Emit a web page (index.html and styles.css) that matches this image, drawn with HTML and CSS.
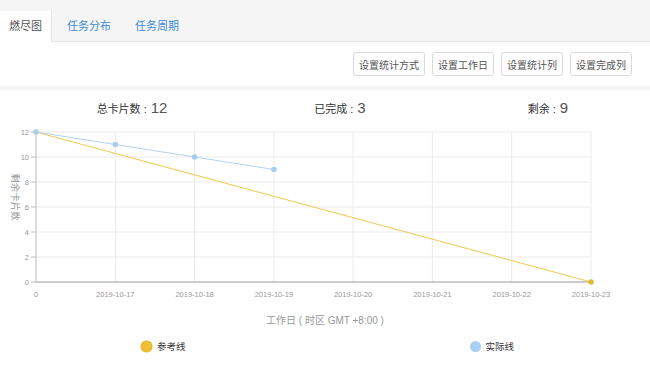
FILE: index.html
```html
<!DOCTYPE html>
<html lang="zh-CN">
<head>
    <meta charset="UTF-8">
    <title>燃尽图</title>
    <link rel="stylesheet" href="styles.css">
</head>
<body>

    <div class="tabs">
        <div class="tab active">燃尽图</div>
        <div class="tab">任务分布</div>
        <div class="tab">任务周期</div>
    </div>

    <div class="toolbar">
        <button>设置统计方式</button>
        <button>设置工作日</button>
        <button>设置统计列</button>
        <button>设置完成列</button>
    </div>

    <div class="panel">
        <div class="stats">
            <div class="stat">总卡片数<span class="colon">:</span><span class="num">12</span></div>
            <div class="stat">已完成<span class="colon">:</span><span class="num">3</span></div>
            <div class="stat">剩余<span class="colon">:</span><span class="num">9</span></div>
        </div>

        <svg class="chart" width="650" height="185" viewBox="0 0 650 185">
            <!-- 网格 -->
            <g class="grid">
                <line x1="36" y1="12" x2="591" y2="12"/>
                <line x1="36" y1="37" x2="591" y2="37"/>
                <line x1="36" y1="62" x2="591" y2="62"/>
                <line x1="36" y1="87" x2="591" y2="87"/>
                <line x1="36" y1="112" x2="591" y2="112"/>
                <line x1="36" y1="137" x2="591" y2="137"/>
                <line x1="115.3" y1="12" x2="115.3" y2="162"/>
                <line x1="194.6" y1="12" x2="194.6" y2="162"/>
                <line x1="273.9" y1="12" x2="273.9" y2="162"/>
                <line x1="353.1" y1="12" x2="353.1" y2="162"/>
                <line x1="432.4" y1="12" x2="432.4" y2="162"/>
                <line x1="511.7" y1="12" x2="511.7" y2="162"/>
                <line x1="591" y1="12" x2="591" y2="162"/>
            </g>
            <g class="axis">
                <line x1="36" y1="12" x2="36" y2="162"/>
                <line x1="36" y1="162" x2="591" y2="162" class="base"/>
                <line x1="31" y1="12" x2="36" y2="12"/>
                <line x1="31" y1="37" x2="36" y2="37"/>
                <line x1="31" y1="62" x2="36" y2="62"/>
                <line x1="31" y1="87" x2="36" y2="87"/>
                <line x1="31" y1="112" x2="36" y2="112"/>
                <line x1="31" y1="137" x2="36" y2="137"/>
                <line x1="31" y1="162" x2="36" y2="162"/>
            </g>
            <g class="ylabels">
                <text x="29" y="15">12</text>
                <text x="29" y="40">10</text>
                <text x="29" y="65">8</text>
                <text x="29" y="90">6</text>
                <text x="29" y="115">4</text>
                <text x="29" y="140">2</text>
                <text x="29" y="165">0</text>
            </g>
            <g class="xlabels">
                <text x="36" y="177">0</text>
                <text x="115.3" y="177">2019-10-17</text>
                <text x="194.6" y="177">2019-10-18</text>
                <text x="273.9" y="177">2019-10-19</text>
                <text x="353.1" y="177">2019-10-20</text>
                <text x="432.4" y="177">2019-10-21</text>
                <text x="511.7" y="177">2019-10-22</text>
                <text x="591" y="177">2019-10-23</text>
            </g>
            <text class="ytitle" x="12" y="77" transform="rotate(90 12 77)">剩余卡片数</text>

            <!-- 参考线 -->
            <polyline class="ideal" points="36,12 591,162"/>
            <circle class="ideal-dot" cx="591" cy="162" r="2.8"/>

            <!-- 实际线 -->
            <polyline class="actual" points="36,12 115.3,24.5 194.6,37 273.9,49.5"/>
            <circle class="actual-dot" cx="36" cy="12" r="2.8"/>
            <circle class="actual-dot" cx="115.3" cy="24.5" r="2.8"/>
            <circle class="actual-dot" cx="194.6" cy="37" r="2.8"/>
            <circle class="actual-dot" cx="273.9" cy="49.5" r="2.8"/>
        </svg>

        <div class="xtitle">工作日 ( 时区 GMT +8:00 )</div>

        <div class="legend">
            <div class="legend-item"><span class="dot yellow"></span>参考线</div>
            <div class="legend-item"><span class="dot blue"></span>实际线</div>
        </div>
    </div>

</body>
</html>
```

FILE: styles.css
```css
body {
    margin: 0;
    font-family: "Liberation Sans", Arial, "Noto Sans CJK SC", sans-serif;
    color: #333;
    background-color: #f5f5f5;
    width: 650px;
}
.tabs {
    height: 42px;
    display: flex;
    align-items: flex-end;
    background-color: #f5f5f5;
    border-bottom: 1px solid #e6e6e6;
    box-sizing: border-box;
}
.tab {
    height: 30px;
    line-height: 30px;
    padding: 0 9px;
    margin-right: 6px;
    font-size: 11px;
    color: #3d8bd4;
    box-sizing: border-box;
}
.tab.active {
    background-color: #fff;
    color: #555;
    border-right: 1px solid #e6e6e6;
    height: 31px;
    margin-bottom: -1px;
}
.toolbar {
    height: 44px;
    background-color: #fff;
    display: flex;
    justify-content: flex-end;
    align-items: center;
    gap: 7px;
    padding-right: 18px;
}
button {
    height: 24px;
    padding: 0 5px;
    font-family: inherit;
    font-size: 10px;
    color: #555;
    background-color: #fff;
    border: 1px solid #d9d9d9;
    border-radius: 3px;
}
.panel {
    margin-top: 4px;
    background-color: #fff;
    height: 275px;
}
.stats {
    height: 26px;
    padding-left: 28px;
    display: grid;
    grid-template-columns: 208px 208px 208px;
    align-items: end;
    text-align: center;
    font-size: 11px;
    color: #333;
}
.colon {
    margin: 0 4px 0 3px;
}
.num {
    font-size: 15px;
    color: #555;
}
.chart {
    display: block;
    margin-top: 4px;
}
.grid line {
    stroke: #ebebeb;
    stroke-width: 1;
}
.axis line {
    stroke: #bbb;
    stroke-width: 1;
}
.axis line.base {
    stroke: #ccc;
    stroke-width: 2;
}
.ylabels text {
    font-size: 7.5px;
    fill: #999;
    text-anchor: end;
}
.xlabels text {
    font-size: 7.5px;
    fill: #999;
    text-anchor: middle;
}
.ytitle {
    font-size: 9.5px;
    fill: #999;
    text-anchor: middle;
}
.ideal {
    fill: none;
    stroke: #f0c850;
    stroke-width: 1;
}
.ideal-dot {
    fill: #e8b92e;
}
.actual {
    fill: none;
    stroke: #b3d4f0;
    stroke-width: 1;
}
.actual-dot {
    fill: #a9cdee;
}
.xtitle {
    margin-top: 7px;
    text-align: center;
    font-size: 10px;
    color: #999;
}
.legend {
    margin-top: 12px;
    display: flex;
    font-size: 9.5px;
    color: #333;
}
.legend-item {
    display: flex;
    align-items: center;
    gap: 5px;
}
.legend-item:first-child {
    margin-left: 141px;
}
.legend-item:last-child {
    margin-left: 284px;
}
.dot {
    width: 11px;
    height: 11px;
    border-radius: 50%;
    display: inline-block;
}
.dot.yellow {
    background-color: #f0be32;
    box-shadow: 0 0 0 0.5px #d9a820;
}
.dot.blue {
    background-color: #a9cff2;
}
```
